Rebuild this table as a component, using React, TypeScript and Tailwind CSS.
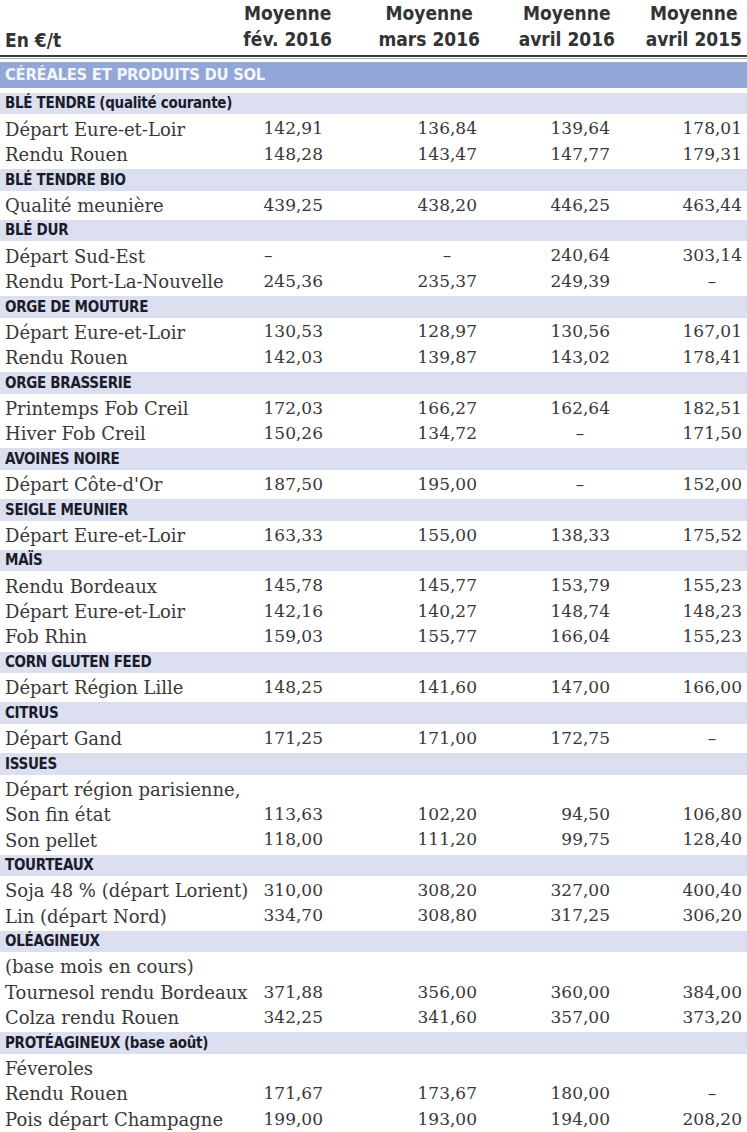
type Row =
  | { kind: 'cat'; label: string; sub?: string }
  | { kind: 'data'; label: string; v?: (string | null)[] };

const rows: Row[] = [
  { kind: 'cat', label: 'BLÉ TENDRE', sub: '(qualité courante)' },
  { kind: 'data', label: 'Départ Eure-et-Loir', v: ['142,91', '136,84', '139,64', '178,01'] },
  { kind: 'data', label: 'Rendu Rouen', v: ['148,28', '143,47', '147,77', '179,31'] },
  { kind: 'cat', label: 'BLÉ TENDRE BIO' },
  { kind: 'data', label: 'Qualité meunière', v: ['439,25', '438,20', '446,25', '463,44'] },
  { kind: 'cat', label: 'BLÉ DUR' },
  { kind: 'data', label: 'Départ Sud-Est', v: [null, null, '240,64', '303,14'] },
  { kind: 'data', label: 'Rendu Port-La-Nouvelle', v: ['245,36', '235,37', '249,39', null] },
  { kind: 'cat', label: 'ORGE DE MOUTURE' },
  { kind: 'data', label: 'Départ Eure-et-Loir', v: ['130,53', '128,97', '130,56', '167,01'] },
  { kind: 'data', label: 'Rendu Rouen', v: ['142,03', '139,87', '143,02', '178,41'] },
  { kind: 'cat', label: 'ORGE BRASSERIE' },
  { kind: 'data', label: 'Printemps Fob Creil', v: ['172,03', '166,27', '162,64', '182,51'] },
  { kind: 'data', label: 'Hiver Fob Creil', v: ['150,26', '134,72', null, '171,50'] },
  { kind: 'cat', label: 'AVOINES NOIRE' },
  { kind: 'data', label: "Départ Côte-d'Or", v: ['187,50', '195,00', null, '152,00'] },
  { kind: 'cat', label: 'SEIGLE MEUNIER' },
  { kind: 'data', label: 'Départ Eure-et-Loir', v: ['163,33', '155,00', '138,33', '175,52'] },
  { kind: 'cat', label: 'MAÏS' },
  { kind: 'data', label: 'Rendu Bordeaux', v: ['145,78', '145,77', '153,79', '155,23'] },
  { kind: 'data', label: 'Départ Eure-et-Loir', v: ['142,16', '140,27', '148,74', '148,23'] },
  { kind: 'data', label: 'Fob Rhin', v: ['159,03', '155,77', '166,04', '155,23'] },
  { kind: 'cat', label: 'CORN GLUTEN FEED' },
  { kind: 'data', label: 'Départ Région Lille', v: ['148,25', '141,60', '147,00', '166,00'] },
  { kind: 'cat', label: 'CITRUS' },
  { kind: 'data', label: 'Départ Gand', v: ['171,25', '171,00', '172,75', null] },
  { kind: 'cat', label: 'ISSUES' },
  { kind: 'data', label: 'Départ région parisienne,' },
  { kind: 'data', label: 'Son fin état', v: ['113,63', '102,20', '94,50', '106,80'] },
  { kind: 'data', label: 'Son pellet', v: ['118,00', '111,20', '99,75', '128,40'] },
  { kind: 'cat', label: 'TOURTEAUX' },
  { kind: 'data', label: 'Soja 48 % (départ Lorient)', v: ['310,00', '308,20', '327,00', '400,40'] },
  { kind: 'data', label: 'Lin (départ Nord)', v: ['334,70', '308,80', '317,25', '306,20'] },
  { kind: 'cat', label: 'OLÉAGINEUX' },
  { kind: 'data', label: '(base mois en cours)' },
  { kind: 'data', label: 'Tournesol rendu Bordeaux', v: ['371,88', '356,00', '360,00', '384,00'] },
  { kind: 'data', label: 'Colza rendu Rouen', v: ['342,25', '341,60', '357,00', '373,20'] },
  { kind: 'cat', label: 'PROTÉAGINEUX', sub: '(base août)' },
  { kind: 'data', label: 'Féveroles' },
  { kind: 'data', label: 'Rendu Rouen', v: ['171,67', '173,67', '180,00', null] },
  { kind: 'data', label: 'Pois départ Champagne', v: ['199,00', '193,00', '194,00', '208,20'] },
];

const headers = [
  ['Moyenne', 'fév. 2016'],
  ['Moyenne', 'mars 2016'],
  ['Moyenne', 'avril 2016'],
  ['Moyenne', 'avril 2015'],
];

const headerWidths = ['w-[92px]', 'w-[148px]', 'w-[135px]', 'w-[127px]'];
const cellWidths = ['w-[65px]', 'w-[154px]', 'w-[133px]', 'w-[132px]'];

const condensed = "font-['Liberation_Sans_Narrow','DejaVu_Sans_Condensed','Liberation_Sans',sans-serif]";
const serif = "font-['DejaVu_Serif','Liberation_Serif',serif]";

function Value({ v, i }: { v: string | null; i: number }) {
  if (v === null) {
    return <span className={`inline-block w-[60px] ${i === 0 ? 'text-left pl-[1px]' : 'text-center'}`}>–</span>;
  }
  return <span>{v}</span>;
}

export default function App() {
  return (
    <div className="w-[747px] h-[1132px] overflow-hidden bg-white text-[#333]">
      {/* en-tête */}
      <div className={`flex h-[55px] items-start leading-[26px] text-[19px] font-bold text-[#333] ${condensed}`}>
        <div className="w-[240px] pl-[5px] pt-[27px]">En €/t</div>
        {headers.map((h, i) => (
          <div key={i} className={`${headerWidths[i]} text-right`}>
            <div className="inline-block text-center">
              <div>{h[0]}</div>
              <div>{h[1]}</div>
            </div>
          </div>
        ))}
      </div>
      <div className="h-[2px] bg-[#3a3a3a]" />
      <div className="h-[1px] bg-white" />
      <div className="h-[1px] bg-[#a9a9a9]" />
      <div className="h-[3px]" />
      <div className={`h-[26px] flex items-center pl-[5px] bg-[#92a6d7] text-[#f3f5fc] text-[16.5px] font-bold tracking-[-0.3px] ${condensed}`}>
        CÉRÉALES ET PRODUITS DU SOL
      </div>
      <div className="h-[3px]" />

      {rows.map((r, idx) =>
        r.kind === 'cat' ? (
          <div key={idx} className="h-[25.4px] py-[2px]">
            <div className={`h-full flex items-center pl-[5px] bg-[#dcdff0] text-[#1a1c2a] text-[15px] font-bold tracking-[-0.3px] ${condensed}`}>
              {r.label}
              {r.sub && <span className="ml-[4px]">{r.sub}</span>}
            </div>
          </div>
        ) : (
          <div key={idx} className={`h-[25.4px] flex items-center text-[18px] text-[#383838] whitespace-nowrap ${serif}`}>
            <div className="w-[258px] pl-[5px] shrink-0">{r.label}</div>
            {r.v &&
              r.v.map((v, i) => (
                <div key={i} className={`${cellWidths[i]} shrink-0 text-right text-[17px]`}>
                  <Value v={v} i={i} />
                </div>
              ))}
          </div>
        ),
      )}
    </div>
  );
}
